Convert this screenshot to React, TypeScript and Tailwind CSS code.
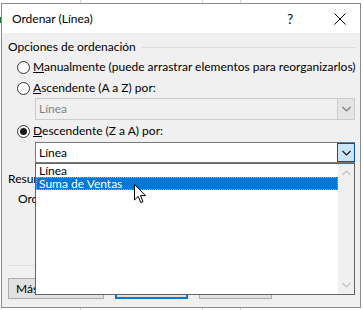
import React from "react";

const Chevron = ({ up = false, color = "#000" }: { up?: boolean; color?: string }) => (
  <svg width="9" height="6" viewBox="0 0 9 6" className="block">
    <path
      d={up ? "M0.5 5 L4.5 1 L8.5 5" : "M0.5 1 L4.5 5 L8.5 1"}
      fill="none"
      stroke={color}
      strokeWidth="1.2"
    />
  </svg>
);

const Radio = ({ checked = false }: { checked?: boolean }) => (
  <span className="w-[13px] h-[13px] rounded-full border border-[#333333] bg-white flex items-center justify-center shrink-0">
    {checked && <span className="w-[7px] h-[7px] rounded-full bg-[#1a1a1a]" />}
  </span>
);

export default function App() {
  return (
    <div className="relative w-[363px] h-[310px] overflow-hidden bg-white text-[12px] leading-[16px] whitespace-nowrap text-black font-['Lato',sans-serif]">
      {/* hoja de cálculo detrás */}
      <div className="absolute left-[80px] top-0 w-px h-full bg-[#d4d4d4]" />
      <div className="absolute left-[202px] top-0 w-px h-full bg-[#d4d4d4]" />
      <div className="absolute left-[240px] top-0 w-px h-full bg-[#d4d4d4]" />
      <div className="absolute left-0 top-[17px] w-[2px] h-[6px] bg-[#217346]" />

      <div className="absolute left-[1px] top-[3px] w-[360px] h-[305px] border border-[#8c8c8c] bg-[#f0f0f0] flex flex-col">
        <div className="h-[29px] shrink-0 bg-white flex items-center pl-[10px]">
          <span>Ordenar (Línea)</span>
          <span className="ml-auto mr-[41px] text-[13px]">?</span>
          <svg width="12" height="12" viewBox="0 0 12 12" className="mr-[14px]">
            <path d="M0.5 0.5 L11.5 11.5 M11.5 0.5 L0.5 11.5" stroke="#000" strokeWidth="1" fill="none" />
          </svg>
        </div>

        <div className="relative flex-1 flex flex-col pl-[6px] pr-[5px]">
          <div className="mt-[6px] h-[16px] flex items-center">
            <span>Opciones de ordenación</span>
            <span className="flex-1 h-px bg-[#dcdcdc] ml-[6px] mr-[-1px]" />
          </div>

          <div className="mt-[3px] h-[18px] flex items-center gap-[3px] pl-[9px]">
            <Radio />
            <span>
              <span className="underline">M</span>anualmente (puede arrastrar elementos para reorganizarlos)
            </span>
          </div>
          <div className="mt-[3px] h-[18px] flex items-center gap-[3px] pl-[9px]">
            <Radio />
            <span>
              <span className="underline">A</span>scendente (A a Z) por:
            </span>
          </div>

          <div className="mt-[1px] ml-[27px] h-[22px] flex border border-[#cccccc] bg-[#f0f0f0]">
            <span className="flex-1 flex items-center pl-[3px] text-[#838383]">Línea</span>
            <span className="w-[17px] bg-[#e5e5e5] border-l border-[#cccccc] flex items-center justify-center">
              <Chevron color="#7a7a7a" />
            </span>
          </div>

          <div className="h-[22px] flex items-center gap-[3px] pl-[9px]">
            <Radio checked />
            <span>
              <span className="underline">D</span>escendente (Z a A) por:
            </span>
          </div>

          <div className="ml-[27px] h-[21px] flex border border-[#7a7a7a] bg-white">
            <span className="flex-1 flex items-center pl-[3px]">Línea</span>
            <span className="w-[18px] -mr-px bg-[#cce4f7] border border-[#005499] flex items-center justify-center">
              <Chevron color="#1a1a1a" />
            </span>
          </div>

          {/* texto tapado por la lista: se recorta en su borde */}
          <div className="mt-[8px] h-[16px] w-[27px] overflow-hidden flex items-center">Resumen</div>
          <div className="mt-[4px] h-[16px] w-[27px] overflow-hidden flex items-center pl-[10px]">Ordenar</div>

          <div className="mt-[58px] h-px bg-[#dfdfdf]" />

          <div className="mt-[12px] flex gap-[11px]">
            <button className="w-[96px] h-[21px] border border-[#adadad] bg-[#e1e1e1] text-left pl-[7px]">
              Más
            </button>
            <button className="w-[73px] h-[21px] border-2 border-[#0078d7] bg-[#e1e1e1]" />
            <button className="w-[73px] h-[21px] border border-[#adadad] bg-[#e1e1e1]" />
          </div>

          {/* lista desplegada */}
          <div className="absolute left-[33px] top-[130px] w-[320px] h-[132px] border border-[#646464] bg-white flex">
            <div className="flex-1 flex flex-col">
              <div className="h-[13px] leading-[13px] pl-[3px]">Línea</div>
              <div className="h-[13px] leading-[11px] pl-[2px] bg-[#0078d7] text-white border border-dotted border-[#f0a030]">
                Suma de Ventas
              </div>
            </div>
            <div className="w-[16px] bg-[#f0f0f0] flex flex-col items-center justify-between pt-[6px] pb-[6px]">
              <Chevron up color="#c2c2c2" />
              <Chevron color="#c2c2c2" />
            </div>
          </div>

          {/* puntero */}
          <svg width="13" height="20" viewBox="0 0 13 20" className="absolute left-[132px] top-[151px]">
            <path d="M0.5 0.5 L0.5 16 L4.2 12.4 L6.8 18.6 L9 17.6 L6.5 11.6 L11.5 11.6 Z" fill="#fff" stroke="#000" strokeWidth="1" />
          </svg>
        </div>
      </div>
    </div>
  );
}
